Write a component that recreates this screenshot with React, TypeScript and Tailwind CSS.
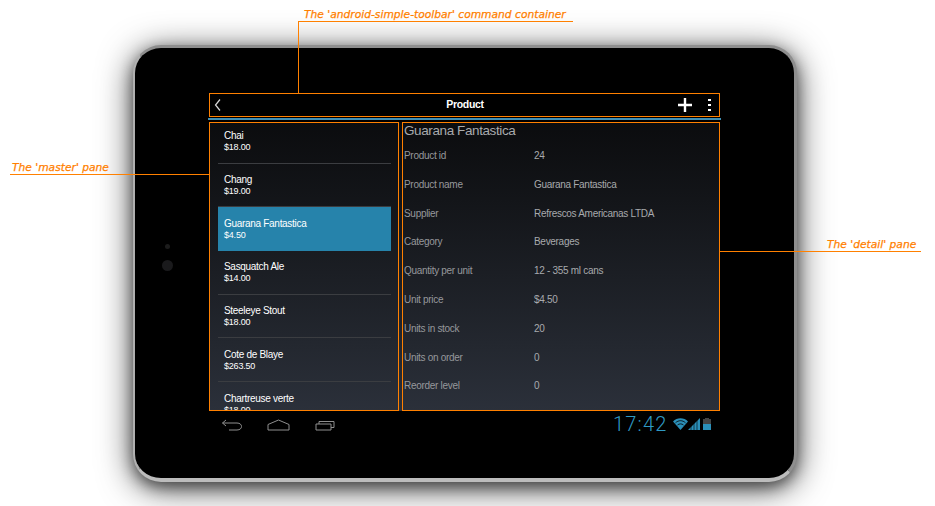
import React from 'react';

const products = [
  {name: 'Chai', price: '$18.00'},
  {name: 'Chang', price: '$19.00'},
  {name: 'Guarana Fantastica', price: '$4.50', selected: true},
  {name: 'Sasquatch Ale', price: '$14.00'},
  {name: 'Steeleye Stout', price: '$18.00'},
  {name: 'Cote de Blaye', price: '$263.50'},
  {name: 'Chartreuse verte', price: '$18.00'},
];

const fields = [
  ['Product id', '24'],
  ['Product name', 'Guarana Fantastica'],
  ['Supplier', 'Refrescos Americanas LTDA'],
  ['Category', 'Beverages'],
  ['Quantity per unit', '12 - 355 ml cans'],
  ['Unit price', '$4.50'],
  ['Units in stock', '20'],
  ['Units on order', '0'],
  ['Reorder level', '0'],
];

const labelClass =
  'absolute text-[10.7px] leading-[14px] italic text-[#ff8000] font-[DejaVu_Sans,sans-serif] [-webkit-text-stroke:0.25px_#ff8000]';

const Toolbar = () => (
  <div className="flex h-6 w-[511px] items-center border border-[#ff8000] bg-black text-white">
    <svg className="ml-1 h-3 w-2" viewBox="0 0 8 12" fill="none" stroke="#d8d8d8" strokeWidth="1.2">
      <path d="M6 .5 1.500 6 6 11.500" />
    </svg>
    <span className="ml-[213px] w-[60px] text-center text-[10.500px] font-bold tracking-[-0.3px]">Product</span>
    <svg className="ml-[182px] h-4 w-4" viewBox="0 0 16 16" fill="none" stroke="#fff" strokeWidth="2.4">
      <path d="M8 1v14M1 8h14" />
    </svg>
    <div className="ml-[15px] flex flex-col gap-[2.700px]">
      <span className="h-[2px] w-[2.500px] bg-white" />
      <span className="h-[2px] w-[2.500px] bg-white" />
      <span className="h-[2px] w-[2.500px] bg-white" />
    </div>
  </div>
);

const MasterPane = () => (
  <div className="h-[289px] w-[190px] overflow-hidden border border-[#ff8000] px-2">
    <div className="-mt-[3px]">
      {products.map(p => (
        <div
          key={p.name}
          className={
            p.selected
              ? 'h-[43.7px] w-[173px] bg-[#2683ab] pt-[9.4px] pl-[6px] text-white'
              : 'h-[43.7px] w-[173px] border-b border-[#3b3d41] pt-[9.4px] pl-[6px] text-white last:border-b-0'
          }>
          <div className="text-[10px] leading-[13px] tracking-[-0.3px]">{p.name}</div>
          <div className="text-[9px] leading-[11px] tracking-[-0.2px]">{p.price}</div>
        </div>
      ))}
    </div>
  </div>
);

const DetailPane = () => (
  <div className="h-[289px] w-[318px] overflow-hidden border border-[#ff8000] pl-[1px] text-[#a8aaad]">
    <h1 className="text-[13.500px] leading-[15px] tracking-[-0.4px]">Guarana Fantastica</h1>
    <div className="mt-[11px] flex flex-col">
      {fields.map(([label, value]) => (
        <div key={label} className="grid h-[28.8px] grid-cols-[130px_1fr] text-[10px] leading-[13px] tracking-[-0.3px]">
          <span className="text-[#96989c]">{label}</span>
          <span>{value}</span>
        </div>
      ))}
    </div>
  </div>
);

const NavBar = () => (
  <div className="mt-[6px] flex h-[16px] w-[511px] items-center">
    <svg className="ml-[12px] h-3 w-[22px]" viewBox="0 0 22 12" fill="none" stroke="#8f8f8f" strokeWidth="1">
      <path d="M5 1 1.500 4 5 7M1.500 4H16c6 0 6 7 0 7H8" />
    </svg>
    <svg className="ml-[24px] h-3 w-[23px]" viewBox="0 0 23 12" fill="none" stroke="#8f8f8f" strokeWidth="1">
      <path d="M1 5.500 11.500 1 22 5.500V11H1Z" />
    </svg>
    <svg className="ml-[25px] h-3 w-[21px]" viewBox="0 0 21 12" fill="none" stroke="#8f8f8f" strokeWidth="1">
      <path d="M1 5h15v6H1ZM4 5V2.500h15v6h-3" />
    </svg>
    <span className="ml-[277px] w-[60px] -translate-y-[1px] text-[20px] leading-[16px] font-light tracking-[1.200px] text-[#2f9ac4] font-['Roboto',sans-serif]">
      17:42
    </span>
    <svg className="-translate-y-[1px] h-3 w-[15px]" viewBox="0 0 15 12" fill="#2b8fb8">
      <path d="M0 3.500C4-.8 11-.8 15 3.500L7.500 12Z" />
      <path d="M2.500 4.800C5.500 2 9.500 2 12.500 4.800" fill="none" stroke="#000" strokeWidth=".8" />
      <path d="M4.500 7C6.300 5.500 8.700 5.500 10.500 7" fill="none" stroke="#000" strokeWidth=".8" />
    </svg>
    <svg className="-translate-y-[1px] h-3 w-3" viewBox="0 0 12 12" fill="#2b8fb8">
      <path d="M0 12 12 0v12Z" />
      <path d="M3 12V8M6 12V5M9 12V2" stroke="#000" strokeWidth=".6" />
    </svg>
    <div className="ml-[3px] flex h-3 w-2 -translate-y-[1px] flex-col">
      <div className="mx-auto h-[1px] w-1 bg-[#444]" />
      <div className="h-[5px] bg-[#444]" />
      <div className="h-[6px] bg-[#2b8fb8]" />
    </div>
  </div>
);

export default function App() {
  return (
    <div className="relative h-[506px] w-[935px] overflow-hidden bg-white font-[Liberation_Sans,sans-serif]">
      <div className="absolute top-[45px] left-[133px] h-[437px] w-[664px] rounded-[28px] border-t-[3px] border-r-[3px] border-b-[4px] border-l-[2px] border-t-[#8e8e8e] border-r-[#8e8e8e] border-b-[#bcbcbc] border-l-[#b0b0b0] bg-black pt-[45px] pl-[74px] shadow-[0_5px_14px_rgba(0,0,0,0.45),0_6px_34px_rgba(0,0,0,0.7)]">
        <Toolbar />
        <div className="mt-[1px] -ml-[1px] h-[2px] w-[513px] bg-[#3f8fb5]" />
        <div className="mt-[2px] flex w-[511px] justify-between bg-gradient-to-b from-[#0b0c0e] to-[#2b303a]">
          <MasterPane />
          <DetailPane />
        </div>
        <NavBar />
        <span className="absolute top-[196px] left-[30px] h-[5px] w-[5px] rounded-full bg-[#1c1c1c]" />
        <span className="absolute top-[212px] left-[27px] h-[11px] w-[11px] rounded-full bg-[#1a1a1c]" />
      </div>

      <span className={`${labelClass} top-[8px] left-[304px]`}>The 'android-simple-toolbar' command container</span>
      <div className="absolute top-[21px] left-[298px] h-[1px] w-[275px] bg-[#ff8000]" />
      <div className="absolute top-[21px] left-[298px] h-[72px] w-[1px] bg-[#ff8000]" />

      <span className={`${labelClass} top-[161px] left-[12px]`}>The 'master' pane</span>
      <div className="absolute top-[174px] left-[10px] h-[1px] w-[199px] bg-[#ff8000]" />

      <span className={`${labelClass} top-[238px] left-[827px]`}>The 'detail' pane</span>
      <div className="absolute top-[251px] left-[720px] h-[1px] w-[201px] bg-[#ff8000]" />
    </div>
  );
}
